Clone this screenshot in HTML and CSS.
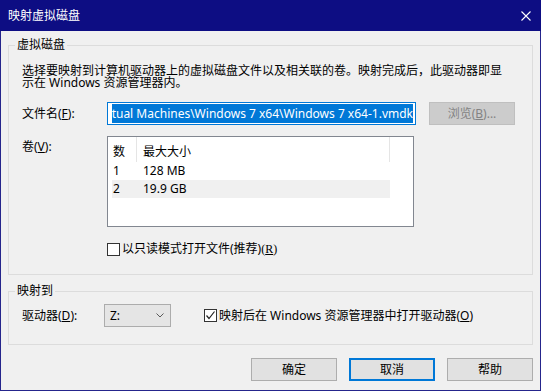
FILE: index.html
```html
<!DOCTYPE html>
<html lang="zh-CN">
<head>
<meta charset="utf-8">
<title>映射虚拟磁盘</title>
<link rel="stylesheet" href="styles.css">
</head>
<body>
<div class="window">
  <div class="titlebar">
    <span class="title">映射虚拟磁盘</span>
    <svg class="close" width="10" height="10" viewBox="0 0 10 10"><path d="M0.5 0.5 L9.5 9.5 M9.5 0.5 L0.5 9.5" stroke="#fff" stroke-width="1.1" fill="none"/></svg>
  </div>
  <div class="body">
    <fieldset class="group group-disk">
      <legend>虚拟磁盘</legend>
      <div class="group-inner">
        <p class="desc">选择要映射到计算机驱动器上的虚拟磁盘文件以及相关联的卷。映射完成后，此驱动器即显示在 Windows 资源管理器内。</p>
        <div class="row row-file">
          <span class="lbl">文件名(<u>F</u>):</span>
          <div class="textbox"><span class="sel">tual Machines\Windows 7 x64\Windows 7 x64-1.vmdk</span></div>
          <span class="btn btn-disabled">浏览(<u>B</u>)...</span>
        </div>
        <div class="row row-vol">
          <span class="lbl lbl-top">卷(<u>V</u>):</span>
          <div class="listview">
            <div class="lv-header"><div class="c1">数</div><div class="c2">最大大小</div></div>
            <div class="lv-row"><div class="c1">1</div><div class="c2">128 MB</div></div>
            <div class="lv-row lv-alt"><div class="c1">2</div><div class="c2">19.9 GB</div></div>
          </div>
        </div>
        <div class="check-row check-ro">
          <span class="cb"></span><span>以只读模式打开文件(推荐)<span class="serif">(<u>R</u>)</span></span>
        </div>
      </div>
    </fieldset>
    <fieldset class="group group-map">
      <legend>映射到</legend>
      <div class="group-inner">
        <div class="row row-drive">
          <span class="lbl lbl-drive">驱动器(<u>D</u>):</span>
          <div class="combo"><span>Z:</span><svg width="8" height="5" viewBox="0 0 8 5"><path d="M0.5 0.5 L4 4 L7.5 0.5" stroke="#5a5a5a" stroke-width="1" fill="none"/></svg></div>
          <div class="check-row check-open">
            <span class="cb cb-on"><svg width="11" height="11" viewBox="0 0 11 11"><path d="M1.5 5.5 L4 8.5 L9.5 1.5" stroke="#222" stroke-width="1.2" fill="none"/></svg></span><span>映射后在 Windows 资源管理器中打开驱动器(<u>O</u>)</span>
          </div>
        </div>
      </div>
    </fieldset>
    <div class="buttons">
      <span class="btn">确定</span>
      <span class="btn btn-default">取消</span>
      <span class="btn">帮助</span>
    </div>
  </div>
</div>
</body>
</html>
```

FILE: styles.css
```css
* { box-sizing: border-box; }
html, body { margin: 0; padding: 0; background: #f0f0f0; }
body {
  font-family: "Noto Sans", "Noto Sans CJK SC", sans-serif;
  font-size: 12px;
  color: #000;
}
.window {
  width: 541px;
  height: 391px;
  border: 1px solid #25258c;
  border-top: none;
  background: #f0f0f0;
  display: flex;
  flex-direction: column;
}
.titlebar {
  height: 31px;
  background: #0d0d83;
  color: #fff;
  display: flex;
  align-items: center;
  justify-content: space-between;
  padding: 0 10px 0 8px;
  margin: 0 -1px;
}
.title { font-size: 12px; line-height: 14px; }
.close { display: block; }
.body { padding: 7px 7px 0 7px; }
.group {
  margin: 0;
  padding: 0;
  border: 1px solid #dcdcdc;
  min-width: 0;
}
.group legend {
  margin-left: 6px;
  padding: 0 2px;
  line-height: 14px;
  font-size: 12px;
}
.group-inner { padding: 0 0 0 13px; }
.group-disk .group-inner { padding-bottom: 18px; }
.group-map { margin-top: 9px; }
.group-map .group-inner { padding-top: 6px; padding-bottom: 17px; }
.desc {
  margin: 13px 0 0 0;
  width: 486px;
  line-height: 12px;
}
.row { display: flex; align-items: center; }
.row-file { margin-top: 13px; height: 23px; }
.row-vol { margin-top: 11px; align-items: flex-start; }
.lbl { width: 85px; flex: none; line-height: 14px; }
.lbl-top { margin-top: 4px; }
.lbl-drive { width: 82px; }
u { text-underline-offset: 1px; }
.textbox {
  width: 309px;
  height: 23px;
  background: #fff;
  border: 1px solid #0078d7;
  padding: 1px 2px 1px 2px;
  display: flex;
  justify-content: flex-end;
  overflow: hidden;
  white-space: nowrap;
}
.sel {
  background: #0078d7;
  color: #fff;
  line-height: 19px;
  flex: none;
}
.btn {
  display: flex;
  align-items: center;
  justify-content: center;
  width: 86px;
  height: 23px;
  background: #e1e1e1;
  border: 1px solid #adadad;
  line-height: 14px;
}
.row-file .btn { margin-left: 13px; }
.btn-disabled {
  background: #cccccc;
  border-color: #bfbfbf;
  color: #838383;
}
.btn-default {
  border-color: #0078d7;
  box-shadow: inset 0 0 0 1px #0078d7;
}
.listview {
  width: 307px;
  height: 91px;
  background: #fff;
  border: 1px solid #828790;
  padding-left: 4px;
}
.lv-header, .lv-row {
  display: flex;
  width: 278px;
}
.lv-header { height: 25px; line-height: 14px; }
.lv-header .c1, .lv-header .c2 { border-right: 1px solid #e5e5e5; padding-top: 8px; height: 25px; }
.c1 { width: 25px; padding-left: 1px; flex: none; }
.c2 { width: 253px; padding-left: 6px; flex: none; }
.lv-row { height: 18px; line-height: 18px; }
.lv-alt { background: #f0f0f0; }
.check-row {
  display: flex;
  align-items: center;
  line-height: 14px;
}
.check-ro { margin: 15px 0 0 85px; }
.cb {
  width: 13px;
  height: 13px;
  border: 1px solid #333;
  background: #fff;
  margin-right: 2px;
  flex: none;
  display: flex;
  align-items: center;
  justify-content: center;
}
.serif { font-family: "Liberation Serif", serif; }
.combo {
  width: 67px;
  height: 23px;
  background: #e5e5e5;
  border: 1px solid #acacac;
  display: flex;
  align-items: center;
  justify-content: space-between;
  padding: 0 6px 0 5px;
  flex: none;
}
.combo svg { display: block; }
.check-open { margin-left: 33px; }
.buttons {
  display: flex;
  justify-content: flex-end;
  gap: 12px;
  margin-top: 13px;
}
```
